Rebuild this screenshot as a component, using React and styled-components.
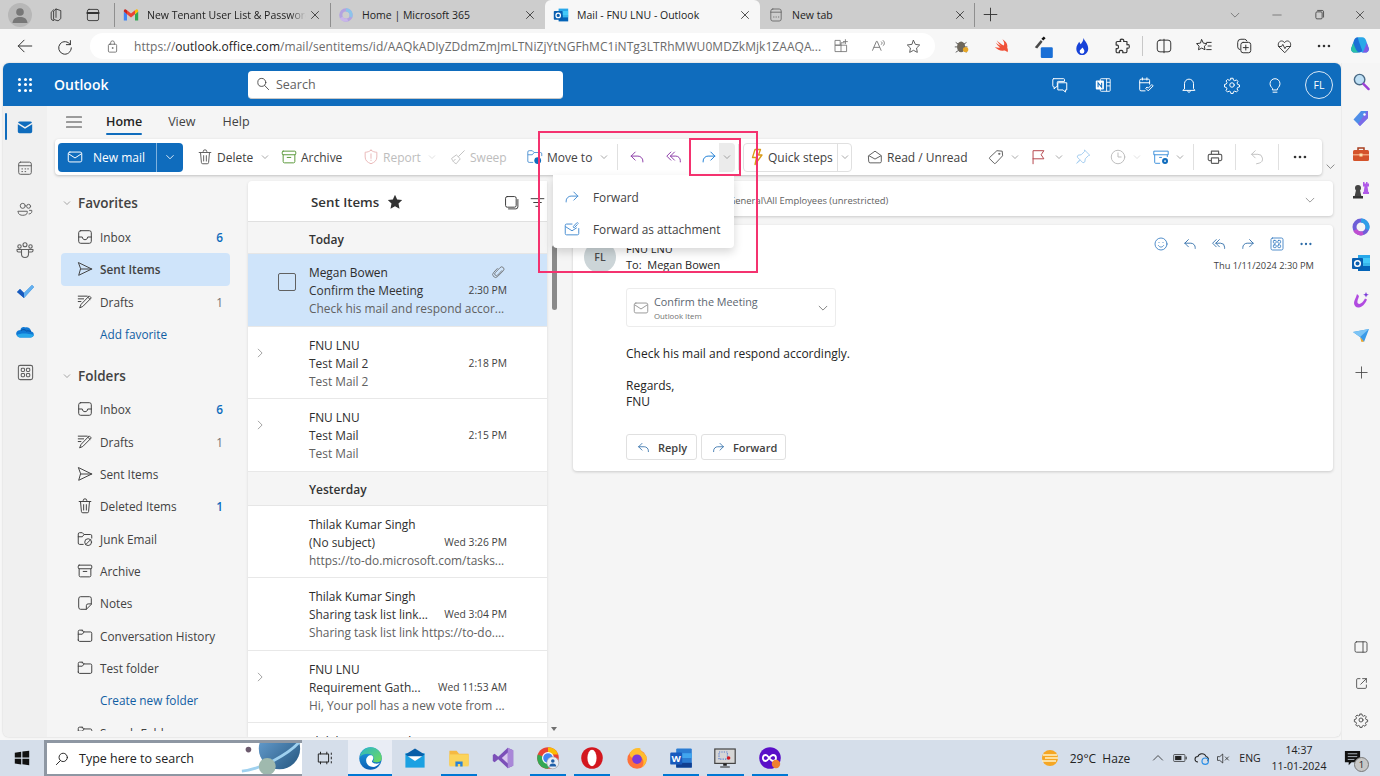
import React from 'react';
import styled, { createGlobalStyle } from 'styled-components';

const Global = createGlobalStyle`
  html, body { margin: 0; padding: 0; height: 776px; overflow: hidden; background: #f7f7f7; }
  body { font-family: "Open Sans", "Noto Sans", "Liberation Sans", sans-serif; color: #242424; font-size: 12px; }
  * { box-sizing: border-box; }
`;

const P = {
  mail: <><rect x="2.5" y="4.5" width="15" height="11" rx="1.8"/><path d="M3 6.5l7 4.6 7-4.6"/></>,
  mailOpen: <><path d="M3 8.5L10 3.5l7 5V15a1.5 1.5 0 0 1-1.5 1.5h-11A1.5 1.5 0 0 1 3 15z"/><path d="M3.5 8.7l6.5 3.6 6.5-3.6"/></>,
  reply: <path d="M8 4.5L3.5 9 8 13.5M3.5 9h7.5a5.5 5.5 0 0 1 5.5 5.5v1"/>,
  replyAll: <path d="M6.5 4.5L2 9l4.5 4.5M10.5 4.5L6 9l4.5 4.5M6 9h6a5 5 0 0 1 5 5v1.5"/>,
  forward: <path d="M12 4.5L16.5 9 12 13.5M16.5 9H9a5.5 5.5 0 0 0-5.5 5.5v1"/>,
  chev: <path d="M4.5 7.5L10 13l5.5-5.5"/>,
  chevR: <path d="M7.5 4.5L13 10l-5.5 5.5"/>,
  chevU: <path d="M3.5 13L10 6.5l6.5 6.5"/>,
  trash: <path d="M3.5 5h13M8 5V4a2 2 0 0 1 4 0v1M5 5l1 11a1.5 1.5 0 0 0 1.5 1.5h5A1.5 1.5 0 0 0 14 16l1-11M8.5 8.5v6M11.5 8.5v6"/>,
  archive: <><rect x="2.5" y="3.5" width="15" height="4" rx="1"/><path d="M3.5 7.5V15a1.5 1.5 0 0 0 1.5 1.5h10a1.5 1.5 0 0 0 1.5-1.5V7.5M8 10.5h4"/></>,
  shield: <path d="M10 2.5c2 1.500 4 2.200 6.500 2.200V10c0 3.800-2.500 6-6.500 7.500C6 16 3.500 13.800 3.500 10V4.700C6 4.700 8 4 10 2.500zM10 6.500v5M10 13.500v.4"/>,
  broom: <path d="M17 3l-6.500 6.500M8.500 8l4 4-4.500 5.500c-2-.8-4-2.800-5-5.500zM5 14.500l2-2"/>,
  bolt: <path d="M8 2.500h5.500L11.500 8H15l-7 9.500 1.500-7H5.500z"/>,
  tag: <><path d="M16.500 3.500L11 3 3 10.500c-.5.5-.5 1 0 1.500l5 5c.5.5 1 .5 1.500 0l7.500-8z"/><circle cx="13.500" cy="6.500" r=".7"/></>,
  flag: <path d="M4.500 17.500V3h12l-3 4.500 3 4.500h-12"/>,
  pin: <path d="M12 2.500l5.500 5.500-1.500.5-3.500 3.500-.5 3.500-2 1-3-3L3 17l3.500-4-3-3 1-2 3.500-.5L11.500 4z"/>,
  clock: <><circle cx="10" cy="10" r="7.500"/><path d="M10 5.500V10h3.500"/></>,
  printer: <><path d="M6 7V3.500h8V7M6 14H4a1.500 1.500 0 0 1-1.500-1.500v-4A1.500 1.500 0 0 1 4 7h12a1.500 1.500 0 0 1 1.500 1.500v4A1.500 1.500 0 0 1 16 14h-2"/><rect x="6" y="11" width="8" height="6" rx=".5"/></>,
  undo: <path d="M8 3L4 7l4 4M4 7h7a5 5 0 0 1 1.500 9.800L9.500 17.500"/>,
  hamburger: <path d="M2.500 5h15M2.500 10h15M2.500 15h15"/>,
  calendar: <><rect x="3" y="3.500" width="14" height="13.500" rx="2"/><path d="M3 7.500h14M6.500 11h.8M10 11h.8M13 11h.8M6.500 14h.8M10 14h.8"/></>,
  people: <><circle cx="7.500" cy="6.500" r="2.800"/><circle cx="14" cy="7" r="2.200"/><path d="M2.500 12.500h10v1.500c0 2-2.500 3-5 3s-5-1-5-3zM15 11.500h2.500v1.500c0 1.500-1.500 2.500-3 2.500"/></>,
  groups: <><circle cx="10" cy="4.800" r="2"/><circle cx="4.500" cy="6.500" r="1.700"/><circle cx="15.500" cy="6.500" r="1.700"/><path d="M6.500 9.500h7V14a3.500 3.500 0 0 1-7 0zM6 12H3.500a1.500 1.500 0 0 1-1.500-1.500V9.500h4M14 12h2.500a1.500 1.500 0 0 0 1.500-1.500V9.500h-4"/></>,
  apps: <><rect x="2.500" y="2.500" width="15" height="15" rx="2"/><rect x="5.500" y="5.500" width="3.500" height="3.500" rx="1"/><rect x="11" y="5.500" width="3.500" height="3.500" rx="1"/><rect x="5.500" y="11" width="3.500" height="3.500" rx="1"/><rect x="11" y="11" width="3.500" height="3.500" rx="1"/></>,
  inbox: <><rect x="3" y="3" width="14" height="14" rx="2.200"/><path d="M3 10h4c0 1.800 1.300 3 3 3s3-1.200 3-3h4"/></>,
  send: <path d="M3 3l14.500 7L3 17l2-7zM5 10h12.500"/>,
  drafts: <path d="M2.500 3.500h10M2.500 6.500h6M2.500 9.500h3M15 3.500l2 2L7.500 15l-3.500 1.500L5.500 13zM13.500 5l2 2"/>,
  folder: <path d="M2.500 14.500v-9.500A1.500 1.500 0 0 1 4 3.500h3L9 5.500h7A1.500 1.500 0 0 1 17.500 7v7.500A1.500 1.500 0 0 1 16 16H4a1.500 1.500 0 0 1-1.500-1.500zM2.500 8h4.500L9 5.500M7 3.500v1"/>,
  junk: <><path d="M8 16H4a1.500 1.500 0 0 1-1.500-1.500v-10A1.500 1.500 0 0 1 4 3h3l2 2h7A1.500 1.500 0 0 1 17.500 6.500V9M2.500 7.500h4.500L9 5"/><circle cx="13.500" cy="13.500" r="3.800"/><path d="M11 16l5-5"/></>,
  note: <path d="M3 5a2 2 0 0 1 2-2h10a2 2 0 0 1 2 2v6.500L11.500 17H5a2 2 0 0 1-2-2zM17 11h-3.500a2 2 0 0 0-2 2v4"/>,
  clip: <path d="M15.500 8l-6 6.500a2.400 2.400 0 0 1-3.500-3.500l7-7.300a3.200 3.200 0 0 1 4.600 4.500L9.500 16.500a4.100 4.100 0 0 1-5.800-5.800L9 5"/>,
  selectAll: <><rect x="3" y="3" width="12.500" height="12.500" rx="2"/><path d="M17.500 6.500V15a2.500 2.500 0 0 1-2.500 2.500H6.500"/></>,
  filter: <path d="M2.500 5.500h15M5.500 10h9M8 14.500h4"/>,
  smile: <><circle cx="10" cy="10" r="7.500"/><path d="M6.800 12c.8 1.200 2 1.800 3.200 1.800s2.400-.6 3.200-1.800M7.500 8v.1M12.500 8v.1"/></>,
  dots: <><circle cx="4.500" cy="10" r=".7"/><circle cx="10" cy="10" r=".7"/><circle cx="15.500" cy="10" r=".7"/></>,
  x: <path d="M5 5l10 10M15 5L5 15"/>,
  plus: <path d="M10 2.500v15M2.500 10h15"/>,
  minus: <path d="M4 10h12"/>,
  restore: <path d="M5.500 7A1.500 1.500 0 0 1 7 5.500h6A1.500 1.500 0 0 1 14.500 7v7a1.500 1.500 0 0 1-1.500 1.500H7A1.500 1.500 0 0 1 5.500 14zM8 3.500h6.500A2 2 0 0 1 16.500 5.500v7.500"/>,
  search: <><circle cx="8.500" cy="8" r="5"/><path d="M12 11.800l5 5.200"/></>,
  searchTB: <><circle cx="11.500" cy="8" r="5.200"/><path d="M8 12L3 17"/></>,
  chat: <path d="M3 3h11a1 1 0 0 1 1 1v2H8a1 1 0 0 0-1 1v5H5.500L3.500 14.500V12H3a1 1 0 0 1-1-1V4a1 1 0 0 1 1-1zM8 7.500h9.500v8H16v2.500l-2.500-2.500H8z"/>,
  calCheck: <path d="M9 16.500H4.500a1.500 1.500 0 0 1-1.500-1.500V5a1.500 1.500 0 0 1 1.500-1.500h8A1.500 1.500 0 0 1 14 5v4M3 7.500h11M6 2v2.500M11 2v2.500M10 14l2.500 2.500L18 11l-1.500-1.500-4 4-1-1z"/>,
  bell: <path d="M5 14V8.500a5 5 0 0 1 10 0V14l1.500 2h-13zM8.500 16.500c0 1 .6 1.500 1.500 1.500s1.500-.5 1.500-1.500"/>,
  gear: <><circle cx="10" cy="10" r="2.500"/><path d="M8.800 2.500h2.400l.4 2.100 1.500.7 1.900-1 1.600 1.700-1 1.800.7 1.600 2 .5v2.300l-2 .5-.7 1.600 1 1.800-1.600 1.700-1.900-1-1.500.7-.4 2h-2.400l-.4-2-1.500-.7-1.900 1-1.600-1.700 1-1.800-.7-1.600-2-.5V9.400l2-.5.7-1.600-1-1.800 1.600-1.700 1.900 1 1.500-.7z"/></>,
  bulb: <path d="M7 13.500C5.500 12.300 4.500 10.500 4.500 8.500a5.500 5.500 0 0 1 11 0c0 2-1 3.800-2.500 5l-.5 2h-5zM7.800 18h4.400"/>,
  lock: <><rect x="4.500" y="7" width="11" height="10.500" rx="1.500"/><path d="M7.500 7V5a2.500 2.500 0 0 1 5 0v2"/><circle cx="10" cy="12" r=".6"/></>,
  back: <path d="M9 3.500L2.500 10 9 16.500M2.500 10h15"/>,
  refresh: <path d="M16 4v4.500h-4.500M16 8.500A7 7 0 1 0 17 12"/>,
  star: <path d="M10 2.800l2.200 4.700 5.100.7-3.700 3.600.9 5.100L10 14.500l-4.500 2.400.9-5.100-3.700-3.600 5.100-.7z"/>,
  favs: <path d="M7.500 3l1.800 3.800 4 .6-2.900 2.800.7 4-3.600-1.900-3.600 1.900.7-4L1.700 7.400l4-.6zM13 6h5M14.500 10h3.500M13 14h5"/>,
  split: <><rect x="2.500" y="3.500" width="15" height="13" rx="3"/><path d="M10 2.500v15"/></>,
  collections: <><rect x="6.500" y="6" width="11" height="11.500" rx="2.500"/><path d="M5.500 14A3 3 0 0 1 3 11V6a3.500 3.500 0 0 1 3.500-3.500h4a3 3 0 0 1 2.800 2M12 9v5.500M9.200 11.800h5.600"/></>,
  puzzle: <path d="M8 3.500c0-1.500 4-1.500 4 0 0 1-.5 1.500 0 1.500h3.500v3.500c0 .5.700 0 1.500 0 1.500 0 1.500 4 0 4-1 0-1.500-.5-1.500 0V16c0 1-1 1.500-2 1.500h-2.500c-.5 0 .2-.8 0-1.500-.5-1.500-3.500-1.500-4 0-.2.700.5 1.500 0 1.500H5c-1 0-1.500-.8-1.500-1.500V13c0-.5.800.2 1.500 0 1.500-.5 1.500-3.500 0-4-.7-.2-1.500.5-1.500 0V6.500C3.500 5.500 4 5 5 5h3.500c.5 0-.5-.5-.5-1.500z"/>,
  heart: <path d="M10 17L3.500 10.500C1.500 8 3.200 3.500 6.500 3.500 8 3.500 9.300 4.300 10 5.500c.7-1.200 2-2 3.500-2 3.300 0 5 4.500 3 7zM3 10h3.500L8 7.500l2.500 5L12 10h5"/>,
  workspaces: <path d="M7 17a3 3 0 0 1-3-3V6.500L7 3.500M7 15V5l3-2.500 6 2v10l-3 2.500zM10 2.500V13"/>,
  vtabs: <><rect x="3" y="3" width="14" height="14" rx="2"/><path d="M3 7.500h14" strokeWidth="2.600"/></>,
  panel: <><rect x="2.500" y="3.500" width="15" height="13" rx="2"/><path d="M12.500 3.500v13"/></>,
  external: <path d="M8 3.500H5A1.500 1.500 0 0 0 3.500 5v10A1.500 1.500 0 0 0 5 16.500h10a1.500 1.500 0 0 0 1.500-1.500v-3M11.500 3.500h5v5M16.500 3.500L9 11"/>,
  taskview: <path d="M5 3.500v2M5 14.500v2M12 3.500v2M12 14.500v2M3 5.500h11v9H3zM17 4.500v1.500M17 9v2M17 14v1.500" />,
  newtab: <><rect x="3.500" y="2.500" width="13" height="15" rx="2.500"/><path d="M3.500 6.500h13M7 12.500h.5M10 12.500h.5M13 12.500h.5"/></>,
  immersive: <path d="M3 14.500L7.500 4h1L13 14.500M4.800 11h6.300M13.500 4.500c1 .8 1 2 0 3M15.500 3c2 1.800 2 4.500 0 6"/>,
  grid: <><rect x="3" y="3" width="6" height="6"/><path d="M3 9h14v8H3zM10 9v8M10 9V6h4M15.500 2v5M13 4.500h5"/></>,
  mailClip: <><path d="M10 4.500H4A1.500 1.500 0 0 0 2.500 6v9A1.500 1.500 0 0 0 4 16.500h12a1.500 1.500 0 0 0 1.500-1.500V9.500"/><path d="M3 7.500l7 4.500 5-3.200"/><path d="M17 3.500a1.400 1.400 0 0 0-2-.1l-3.500 3.800a.9.900 0 0 0 1.300 1.200l3-3.200"/></>,
};

const SvgBox = styled.svg`
  display: block;
  flex-shrink: 0;
`;

const Ic = ({ n, s = 18, c = 'currentColor', w = 1.1 }) => (
  <SvgBox viewBox="0 0 20 20" width={s} height={s} fill="none" stroke={c} strokeWidth={w} strokeLinecap="round" strokeLinejoin="round">
    {P[n]}
  </SvgBox>
);

const Logo = ({ s = 16, v = 20, children }) => (
  <SvgBox viewBox={`0 0 ${v} ${v}`} width={s} height={s}>{children}</SvgBox>
);

const Gmail = () => (
  <Logo>
    <path fill="#4285f4" d="M1 17h4V9L1 5.500z" />
    <path fill="#34a853" d="M15 17h4V5.500L15 9z" />
    <path fill="#ea4335" d="M5 9l5 4 5-4V4l-5 4-5-4z" />
    <path fill="#c5221f" d="M1 5.500L5 9V4L3.500 3C2 2.500 1 3.500 1 5.500z" />
    <path fill="#fbbc04" d="M19 5.500L15 9V4l1.500-1c1.500-.5 2.500.5 2.500 2.500z" />
  </Logo>
);
const M365 = () => (
  <Logo>
    <circle cx="10" cy="10" r="6.500" fill="none" stroke="#b3a3e0" strokeWidth="4" />
    <path d="M10 3.500a6.500 6.500 0 0 1 6 9" fill="none" stroke="#8cc4ea" strokeWidth="4" />
    <path d="M4 13a6.500 6.500 0 0 0 8 3" fill="none" stroke="#c9b5ea" strokeWidth="4" />
  </Logo>
);
const OutlookLogo = ({ s = 16 }) => (
  <Logo s={s}>
    <rect x="7" y="2" width="12" height="8" fill="#28a8ea" />
    <rect x="7" y="10" width="12" height="8" fill="#0364b8" />
    <rect x="12" y="5" width="7" height="8" fill="#50d9ff" opacity=".7" />
    <rect x="1" y="5" width="11" height="11" rx="1" fill="#0a5fb0" />
    <circle cx="6.500" cy="10.500" r="2.800" fill="none" stroke="#fff" strokeWidth="1.500" />
  </Logo>
);
const EdgeLogo = ({ s = 25 }) => (
  <Logo s={s}>
    <defs>
      <linearGradient id="edgeG" x1="0" y1="0" x2="1" y2="1"><stop offset="0" stopColor="#2bb5c8" /><stop offset="1" stopColor="#6fdc5a" /></linearGradient>
      <linearGradient id="edgeB" x1="0" y1="0" x2="0" y2="1"><stop offset="0" stopColor="#1fa0e0" /><stop offset="1" stopColor="#0b5fb5" /></linearGradient>
    </defs>
    <circle cx="10" cy="10" r="9" fill="url(#edgeB)" />
    <path d="M1.500 8.500C2.500 4 6 1 10 1c5 0 9 4 9 8.500 0 2.300-2 3.500-4 3.500-2 0-3.500-.5-3-1 1-1 1-3.500-1-5C8.500 5.500 4 6 1.500 8.500z" fill="url(#edgeG)" />
    <path d="M6.500 11.500c0-3 3-4.800 5-3.700 1 .8 1 2.700 0 3.700-.8.800-.2 2 2 2.500 1.500.3 3 0 4-.6-1.500 2.200-4 3.800-6.500 3.300-2.700-.5-4.500-2.700-4.500-5.200z" fill="#fff" />
  </Logo>
);

const Page = styled.div`
  position: relative;
  width: 1380px;
  height: 776px;
  display: flex;
  flex-direction: column;
  overflow: hidden;
`;

const TabStrip = styled.div`
  height: 29px;
  background: #cdcdcd;
  display: flex;
  align-items: stretch;
`;
const StripButton = styled.div`
  width: ${p => p.$w}px;
  display: flex;
  align-items: center;
  justify-content: center;
  color: #333;
`;
const Avatar16 = styled.div`
  width: 24px;
  height: 24px;
  border-radius: 50%;
  background: #b7b7b7;
  display: flex;
  align-items: center;
  justify-content: center;
`;
const Divider = styled.div`
  width: 1px;
  height: ${p => p.$h || 24}px;
  background: ${p => p.$c || '#8f8f8f'};
  align-self: center;
  flex-shrink: 0;
  margin-left: ${p => p.$ml || 0}px;
  margin-right: ${p => p.$mr || 0}px;
`;
const Tab = styled.div`
  width: 215px;
  flex-shrink: 0;
  padding: 0 8px;
  display: flex;
  align-items: center;
  gap: 8px;
  font-size: 10.500px;
  color: #222;
  background: ${p => (p.$active ? '#f7f7f7' : 'transparent')};
  border-radius: ${p => (p.$active ? '6px 6px 0 0' : '0')};
`;
const TabTitle = styled.div`
  flex: 1;
  min-width: 0;
  overflow: hidden;
  white-space: nowrap;
  margin-right: ${p => (p.$fade ? -6 : 0)}px;
  -webkit-mask-image: ${p => (p.$fade ? 'linear-gradient(90deg, #000 90%, transparent 100%)' : 'none')};
`;
const WindowControls = styled.div`
  margin-left: auto;
  display: flex;
  align-items: stretch;
`;

const AddressBar = styled.div`
  height: 34px;
  background: #f7f7f7;
  display: flex;
  align-items: center;
  padding-left: 5px;
`;
const BarButton = styled.div`
  width: ${p => p.$w || 40}px;
  height: 34px;
  display: flex;
  align-items: center;
  justify-content: center;
  color: #333;
  flex-shrink: 0;
`;
const UrlPill = styled.div`
  width: 845px;
  height: 26px;
  margin: 0 7px 0 5px;
  background: #fff;
  border-radius: 13px;
  display: flex;
  align-items: center;
  padding-left: 15px;
  flex-shrink: 0;
  color: #555;
`;
const UrlText = styled.div`
  width: 689px;
  margin-left: 14px;
  font-size: 12px;
  white-space: nowrap;
  overflow: hidden;
  color: #6b6b6b;
  letter-spacing: 0.05px;
  b { font-weight: 400; color: #222; }
`;
const PillIcon = styled.div`
  width: ${p => p.$w}px;
  display: flex;
  justify-content: center;
  color: #666;
`;

const Middle = styled.div`
  flex: 1;
  min-height: 0;
  display: flex;
`;
const OutlookWindow = styled.div`
  width: 1338px;
  margin-left: 3px;
  height: 674px;
  display: flex;
  flex-direction: column;
  border-radius: 6px;
  overflow: hidden;
  background: #f5f5f5;
  box-shadow: 0 0 2px rgba(0,0,0,.2);
`;
const Header = styled.div`
  height: 43px;
  flex-shrink: 0;
  background: #0f6cbd;
  color: #fff;
  display: flex;
  align-items: center;
  padding-right: 8px;
`;
const Waffle = styled.div`
  width: 44px;
  display: grid;
  grid-template-columns: repeat(3, 3px);
  grid-auto-rows: 3px;
  gap: 2.500px;
  justify-content: center;
  i { background: #fff; border-radius: 50%; display: block; }
`;
const Brand = styled.div`
  width: 201px;
  padding-left: 7px;
  font-size: 14px;
  font-weight: 600;
`;
const SearchBox = styled.div`
  width: 315px;
  height: 28px;
  background: #fff;
  border-radius: 4px;
  border-bottom: 1px solid #c8c8c8;
  color: #616161;
  display: flex;
  align-items: center;
  gap: 5px;
  padding-left: 7px;
  font-size: 12.500px;
`;
const HeaderIcons = styled.div`
  margin-left: auto;
  display: flex;
  align-items: center;
`;
const HeaderIcon = styled.div`
  width: 43px;
  display: flex;
  justify-content: center;
`;
const HeaderAvatar = styled.div`
  width: 28px;
  height: 28px;
  border-radius: 50%;
  border: 1px solid #dbe9f6;
  margin-left: 8.500px;
  display: flex;
  align-items: center;
  justify-content: center;
  font-size: 10.500px;
`;

const Body = styled.div`
  flex: 1;
  min-height: 0;
  display: flex;
`;
const Rail = styled.div`
  width: 44px;
  flex-shrink: 0;
  background: #f0f0f0;
  display: flex;
  flex-direction: column;
`;
const RailItem = styled.div`
  height: 41px;
  display: flex;
  align-items: center;
  justify-content: center;
  color: #616161;
  position: relative;
  &::before {
    content: ${p => (p.$active ? '""' : 'none')};
    position: absolute;
    left: 2px;
    top: 7px;
    bottom: 7px;
    width: 2px;
    background: #0f6cbd;
    border-radius: 1px;
  }
`;
const Main = styled.div`
  flex: 1;
  min-width: 0;
  display: flex;
  flex-direction: column;
`;
const RibbonTabs = styled.div`
  height: 33px;
  flex-shrink: 0;
  display: flex;
  align-items: center;
  padding: 0 0 2px 17px;
  color: #424242;
`;
const RibbonTab = styled.div`
  font-size: 12.500px;
  margin-left: ${p => p.$ml}px;
  font-weight: ${p => (p.$active ? 600 : 400)};
  color: ${p => (p.$active ? '#242424' : '#424242')};
  position: relative;
  &::after {
    content: ${p => (p.$active ? '""' : 'none')};
    position: absolute;
    left: 0;
    right: 0;
    bottom: -5px;
    height: 2.500px;
    background: #0f6cbd;
    border-radius: 1px;
  }
`;
const ToolRow = styled.div`
  display: flex;
  align-items: flex-end;
  padding-left: 8px;
  height: 36px;
  flex-shrink: 0;
  color: #616161;
`;
const Toolbar = styled.div`
  width: 1267px;
  height: 36px;
  background: #fff;
  border-radius: 4px;
  box-shadow: 0 1px 3px rgba(0,0,0,.22);
  display: flex;
  align-items: center;
  padding-left: 3px;
  margin-right: 2px;
  flex-shrink: 0;
`;
const NewMail = styled.div`
  width: 125px;
  height: 29px;
  background: #0f6cbd;
  color: #fff;
  border-radius: 4px;
  display: flex;
  align-items: stretch;
  font-size: 12px;
`;
const NewMailMain = styled.div`
  width: 99px;
  display: flex;
  align-items: center;
  gap: 9px;
  padding-left: 8px;
  border-right: 1px solid #7fb2de;
`;
const NewMailChev = styled.div`
  flex: 1;
  display: flex;
  align-items: center;
  justify-content: center;
`;
const ToolBtn = styled.div`
  width: ${p => p.$w}px;
  flex-shrink: 0;
  margin-left: ${p => p.$ml || 0}px;
  display: flex;
  align-items: center;
  justify-content: ${p => (p.$center ? 'center' : 'flex-start')};
  gap: 3px;
  font-size: 12px;
  white-space: nowrap;
  color: ${p => (p.$off ? '#bdbdbd' : '#424242')};
`;
const SmallChev = styled.span`
  margin-left: ${p => p.$ml || 2}px;
  color: ${p => (p.$off ? '#c8c8c8' : '#616161')};
  display: block;
`;
const ForwardMain = styled.div`
  width: 28px;
  padding-left: 9px;
  flex-shrink: 0;
`;
const ForwardChev = styled.div`
  width: 16px;
  height: 29px;
  background: #ebebeb;
  border-radius: 0 4px 4px 0;
  display: flex;
  align-items: center;
  justify-content: center;
  color: #616161;
  flex-shrink: 0;
`;
const QuickBox = styled.div`
  width: 109px;
  height: 29px;
  margin-left: 4px;
  border: 1px solid #e0e0e0;
  border-radius: 4px;
  display: flex;
  align-items: stretch;
  flex-shrink: 0;
`;
const QuickMain = styled.div`
  width: 94px;
  padding-left: 3px;
  border-right: 1px solid #e0e0e0;
  display: flex;
  align-items: center;
  gap: 1px;
  font-size: 12px;
  white-space: nowrap;
  color: #424242;
`;
const QuickChev = styled.div`
  flex: 1;
  display: flex;
  align-items: center;
  justify-content: center;
`;
const RowChev = styled.div`
  padding-bottom: 2px;
  color: #616161;
`;
const Content = styled.div`
  flex: 1;
  min-height: 0;
  margin-top: 6px;
  display: flex;
`;
const Nav = styled.div`
  width: 201px;
  flex-shrink: 0;
  padding-top: 6px;
  overflow: hidden;
  height: 550px;
`;
const NavHead = styled.div`
  height: 32px;
  display: flex;
  align-items: center;
  padding-left: 15px;
  gap: 6px;
  margin-top: ${p => p.$mt || 0}px;
  margin-bottom: ${p => p.$mb || 0}px;
  font-size: 13.500px;
  font-weight: 600;
  color: #424242;
`;
const NavRow = styled.div`
  height: 32.330px;
  margin: 0 18px 0 14px;
  padding: 0 7px 0 15px;
  display: flex;
  align-items: center;
  gap: 6px;
  font-size: 11.800px;
  border-radius: 4px;
  color: ${p => (p.$link ? '#115ea3' : '#424242')};
  background: ${p => (p.$active ? '#cfe4fa' : 'transparent')};
  font-weight: ${p => (p.$active ? 600 : 400)};
`;
const NavLabel = styled.span`
  flex: 1;
  white-space: nowrap;
  padding-left: ${p => (p.$indent ? 24 : 0)}px;
`;
const Count = styled.span`
  font-weight: ${p => (p.$blue ? 600 : 400)};
  color: ${p => (p.$blue ? '#0f6cbd' : '#707070')};
`;
const ListPanel = styled.div`
  width: 299px;
  flex-shrink: 0;
  background: #fff;
  border-radius: 4px 0 0 0;
  overflow: hidden;
  box-shadow: 0 1px 3px rgba(0,0,0,.12);
`;
const ListHead = styled.div`
  height: 41px;
  border-bottom: 1px solid #e0e0e0;
  display: flex;
  align-items: center;
  padding: 2px 0 0 63px;
  font-size: 13.300px;
  font-weight: 600;
  color: #333;
  gap: 7px;
`;
const HeadTools = styled.div`
  margin-left: auto;
  display: flex;
  gap: 9px;
  padding-right: 1px;
  color: #333;
`;
const GroupHead = styled.div`
  height: ${p => p.$h}px;
  background: #f5f5f5;
  padding: 3px 0 0 61px;
  display: flex;
  align-items: center;
  font-weight: 600;
  font-size: 12px;
  color: #333;
  border-bottom: 1px solid #e6e6e6;
`;
const Item = styled.div`
  height: 72.500px;
  border-bottom: 1px solid #e8e8e8;
  background: ${p => (p.$active ? '#cfe4fa' : '#fff')};
  display: flex;
  padding: 9px 40px 0 0;
`;
const ItemLead = styled.div`
  width: 61px;
  flex-shrink: 0;
  padding: ${p => (p.$check ? '10px 0 0 30px' : '10px 0 0 5px')};
  color: #757575;
`;
const Check = styled.div`
  width: 18px;
  height: 18px;
  background: transparent;
  border: 1px solid #616161;
  border-radius: 2px;
`;
const ItemBody = styled.div`
  flex: 1;
  min-width: 0;
  font-size: 11.900px;
  line-height: 18px;
`;
const Line = styled.div`
  display: flex;
  justify-content: space-between;
  align-items: center;
  white-space: nowrap;
  height: 18px;
  color: ${p => p.$c || '#333'};
`;
const Time = styled.span`
  font-size: 10.300px;
  color: #424242;
  flex-shrink: 0;
`;
const ClipWrap = styled.span`
  margin-right: 2px;
  color: #616161;
`;
const ScrollTrack = styled.div`
  width: 14px;
  flex-shrink: 0;
  padding-top: 64px;
  display: flex;
  flex-direction: column;
  align-items: center;
  height: 555px;
`;
const Thumb = styled.div`
  width: 5px;
  height: 65px;
  background: #8a8a8a;
  border-radius: 3px;
`;
const ScrollArrow = styled.div`
  width: 0;
  height: 0;
  border: 3px solid transparent;
  border-top: 4px solid #707070;
  margin-top: auto;
  margin-bottom: 2px;
`;
const Reading = styled.div`
  width: 760px;
  margin-left: 12px;
  flex-shrink: 0;
  display: flex;
  flex-direction: column;
  gap: 9px;
`;
const LabelBar = styled.div`
  height: 35px;
  background: #fff;
  border-radius: 4px;
  box-shadow: 0 1px 3px rgba(0,0,0,.18);
  display: flex;
  align-items: center;
  padding: 3px 16px 0 155.500px;
  font-size: 9.400px;
  color: #616161;
  justify-content: space-between;
  white-space: nowrap;
`;
const Card = styled.div`
  background: #fff;
  border-radius: 4px;
  box-shadow: 0 1px 3px rgba(0,0,0,.18);
  padding: 16px 19px 11px 11px;
`;
const CardHead = styled.div`
  display: flex;
  align-items: flex-start;
  gap: 10px;
  height: 32px;
`;
const PersonaCircle = styled.div`
  width: 32px;
  height: 32px;
  border-radius: 50%;
  background: #ccd5d8;
  color: #4a4a4a;
  font-size: 10.500px;
  font-weight: 600;
  display: flex;
  align-items: center;
  justify-content: center;
  flex-shrink: 0;
`;
const WhoBlock = styled.div`
  font-size: 11px;
  line-height: 16px;
`;
const MetaBlock = styled.div`
  margin-left: auto;
  display: flex;
  flex-direction: column;
  align-items: flex-end;
  margin-top: -8px;
`;
const ActionRow = styled.div`
  display: flex;
  margin-right: -6px;
  color: #2d6ca8;
`;
const ActionIcon = styled.div`
  width: 29px;
  height: 22px;
  display: flex;
  align-items: center;
  justify-content: center;
`;
const DateText = styled.div`
  font-size: 9.300px;
  color: #424242;
  margin-top: 4px;
`;
const CardInner = styled.div`
  padding-left: 42px;
`;
const Attachment = styled.div`
  width: 210px;
  height: 39px;
  margin-top: 15px;
  border: 1px solid #ececec;
  border-radius: 3px;
  display: flex;
  align-items: center;
  padding: 0 5px 0 5px;
  color: #8a8a8a;
  gap: 4px;
`;
const AttachText = styled.div`
  flex: 1;
  padding-top: 2px;
`;
const AttachName = styled.div`
  font-size: 10.800px;
  line-height: 14px;
  color: #5c6670;
`;
const AttachKind = styled.div`
  font-size: 7.800px;
  line-height: 12px;
  margin-top: 1px;
  color: #707070;
`;
const Message = styled.div`
  margin-top: 19px;
  font-size: 12px;
  line-height: 16px;
  color: #242424;
`;
const Blank = styled.div`
  height: 16px;
`;
const ReplyRow = styled.div`
  display: flex;
  gap: 4px;
  margin-top: 24px;
`;
const ReplyBtn = styled.div`
  width: ${p => p.$w}px;
  height: 26px;
  border: 1px solid #e0e0e0;
  border-radius: 3px;
  display: flex;
  align-items: center;
  gap: 7px;
  padding-left: 9px;
  font-size: 11px;
  font-weight: 600;
  color: #424242;
`;

const SideBar = styled.div`
  flex: 1;
  display: flex;
  flex-direction: column;
  align-items: stretch;
  background: #f5f5f5;
  border-left: 1px solid #ececec;
`;
const SideIcon = styled.div`
  height: 36.400px;
  display: flex;
  align-items: center;
  justify-content: center;
  color: #424242;
`;
const SideBottom = styled.div`
  margin-top: auto;
  padding-bottom: 2px;
`;

const Taskbar = styled.div`
  height: 36px;
  background: #d5deea;
  display: flex;
  align-items: stretch;
  flex-shrink: 0;
`;
const WinStart = styled.div`
  width: 44px;
  display: flex;
  align-items: center;
  justify-content: center;
`;
const TaskSearch = styled.div`
  width: 258px;
  background: #fff;
  border: 3px solid #8e97a3;
  border-bottom-width: 2px;
  border-right: 0;
  display: flex;
  align-items: center;
  padding-left: 7px;
  gap: 9px;
  font-size: 12.500px;
  color: #222;
  overflow: hidden;
`;
const Planet = styled.div`
  margin-left: auto;
`;
const TaskApp = styled.div`
  width: ${p => p.$w || 44.400}px;
  flex-shrink: 0;
  display: flex;
  align-items: center;
  justify-content: center;
  position: relative;
  background: ${p => (p.$active ? '#e9edf5' : 'transparent')};
  &::after {
    content: ${p => (p.$run ? '""' : 'none')};
    position: absolute;
    bottom: 0;
    left: ${p => (p.$active ? 0 : 4)}px;
    right: ${p => (p.$active ? 0 : 4)}px;
    height: 2.500px;
    background: #0078d4;
  }
`;
const Tray = styled.div`
  margin-left: auto;
  display: flex;
  align-items: center;
  padding-right: 8px;
  color: #222;
`;
const TrayCell = styled.div`
  width: ${p => p.$w}px;
  margin-left: ${p => p.$ml || 0}px;
  display: flex;
  justify-content: center;
  align-items: center;
  font-size: ${p => p.$fs || 11}px;
  white-space: nowrap;
`;
const ClockCell = styled.div`
  width: 66px;
  text-align: center;
  font-size: 10.500px;
  line-height: 16px;
`;
const Badge = styled.span`
  position: absolute;
  right: 3px;
  bottom: -4px;
  width: 15px;
  height: 15px;
  border-radius: 50%;
  background: #c7c7c7;
  border: 1px solid #777;
  font-size: 9.500px;
  line-height: 13px;
  text-align: center;
`;
const NotifWrap = styled.div`
  position: relative;
  width: 40px;
  display: flex;
  justify-content: center;
`;

const Menu = styled.div`
  position: absolute;
  left: 553px;
  top: 175px;
  width: 181px;
  height: 73px;
  padding-top: 6px;
  background: #fff;
  border-radius: 0 0 4px 4px;
  box-shadow: 0 4px 10px rgba(0,0,0,.16);
  z-index: 5;
`;
const MenuItem = styled.div`
  height: 32px;
  display: flex;
  align-items: center;
  gap: 12px;
  padding-left: 10px;
  font-size: 11.800px;
  color: #424242;
  white-space: nowrap;
`;
const Annot = styled.div`
  position: absolute;
  left: ${p => p.$x}px;
  top: ${p => p.$y}px;
  width: ${p => p.$w}px;
  height: ${p => p.$h}px;
  border: 2px solid #f4326f;
  z-index: 6;
  pointer-events: none;
`;

const grey = '#616161';
const Chev = ({ off, s = 10, ml }) => (
  <SmallChev $off={off} $ml={ml}><Ic n="chev" s={s} /></SmallChev>
);

const NavItems = ({ icon, label, count, blue, active }) => (
  <NavRow $active={active}>
    <Ic n={icon} s={18} />
    <NavLabel>{label}</NavLabel>
    {count && <Count $blue={blue}>{count}</Count>}
  </NavRow>
);

const Msg = ({ sender, subject, preview, time, chev, active }) => (
  <Item $active={active}>
    <ItemLead $check={active}>
      {active ? <Check /> : chev && <Ic n="chevR" s={14} c="#888" />}
    </ItemLead>
    <ItemBody>
      <Line $c="#2b2b2b">
        {sender}
        {active && <ClipWrap><Ic n="clip" s={14} /></ClipWrap>}
      </Line>
      <Line $c="#333">
        {subject}
        <Time>{time}</Time>
      </Line>
      <Line $c="#616161">{preview}</Line>
    </ItemBody>
  </Item>
);

function M365Side() {
  return (
    <Logo s={20}>
      <circle cx="10" cy="10" r="6.500" fill="none" stroke="#6f5fd8" strokeWidth="4" />
      <path d="M10 3.500a6.500 6.500 0 0 1 6 9" fill="none" stroke="#2f9fe8" strokeWidth="4" />
      <path d="M4 13a6.500 6.500 0 0 0 8 3" fill="none" stroke="#c04fd0" strokeWidth="4" />
    </Logo>
  );
}

export default function App() {
  return (
    <Page>
      <Global />
      <TabStrip>
        <StripButton $w={8} />
        <StripButton $w={24}>
          <Avatar16>
            <Logo s={20}><circle cx="10" cy="7" r="3.800" fill="#777" /><path d="M2.500 18c.5-4.500 3.500-6 7.500-6s7 1.500 7.500 6z" fill="#777" /></Logo>
          </Avatar16>
        </StripButton>
        <StripButton $w={48}><Ic n="workspaces" s={16} /></StripButton>
        <StripButton $w={26}><Ic n="vtabs" s={16} /></StripButton>
        <Divider $ml={8} />
        <Tab>
          <Gmail />
          <TabTitle $fade>New Tenant User List &amp; Password</TabTitle>
          <Ic n="x" s={14} c="#222" />
        </Tab>
        <Divider $mr={-1} />
        <Tab>
          <M365 />
          <TabTitle>Home | Microsoft 365</TabTitle>
          <Ic n="x" s={14} c="#222" />
        </Tab>
        <Tab $active>
          <OutlookLogo />
          <TabTitle>Mail - FNU LNU - Outlook</TabTitle>
          <Ic n="x" s={14} c="#222" />
        </Tab>
        <Tab>
          <Ic n="newtab" s={16} c="#666" />
          <TabTitle>New tab</TabTitle>
          <Ic n="x" s={14} c="#222" />
        </Tab>
        <Divider $ml={-1} />
        <StripButton $w={30}><Ic n="plus" s={17} /></StripButton>
        <WindowControls>
          <StripButton $w={42}><Ic n="chev" s={14} c="#666" /></StripButton>
          <StripButton $w={42}><Ic n="minus" s={14} c="#666" /></StripButton>
          <StripButton $w={41}><Ic n="restore" s={14} /></StripButton>
          <StripButton $w={41}><Ic n="x" s={14} /></StripButton>
        </WindowControls>
      </TabStrip>

      <AddressBar>
        <BarButton><Ic n="back" s={18} /></BarButton>
        <BarButton><Ic n="refresh" s={18} /></BarButton>
        <UrlPill>
          <Ic n="lock" s={15} c="#666" />
          <UrlText>https://<b>outlook.office.com</b>/mail/sentitems/id/AAQkADIyZDdmZmJmLTNiZjYtNGFhMC1iNTg3LTRhMWU0MDZkMjk1ZAAQA...</UrlText>
          <PillIcon $w={36}><Ic n="grid" s={16} c="#777" /></PillIcon>
          <PillIcon $w={38}><Ic n="immersive" s={17} c="#777" /></PillIcon>
          <PillIcon $w={32}><Ic n="star" s={17} c="#555" /></PillIcon>
        </UrlPill>
        <BarButton>
          <Logo s={18}>
            <ellipse cx="9" cy="11" rx="4.500" ry="6" fill="#6e675b" />
            <path d="M3 6l3 2M15 6l-3 2M2 11h3M16 11h-3M3 17l3-2M15 17l-3-2" stroke="#555" fill="none" />
            <circle cx="14" cy="14" r="3" fill="#e7a727" />
          </Logo>
        </BarButton>
        <BarButton>
          <Logo s={18}>
            <path d="M2 11c3 3 7 5 10 4 1.500 0 3 .5 4 2 .8-1.500.8-3-.2-5 .8-3-.8-7-5.300-9.500 1.800 2.500 2.500 5 1.500 7C9 7.800 6 5.500 4 3.500c1.500 2.500 3.500 5 5 6.500C7 9 4.500 7.500 3 6c1 2 3 4 5 5.800-2 .3-4 0-6-.8z" fill="#f05138" />
          </Logo>
        </BarButton>
        <BarButton>
          <Logo s={24}>
            <path d="M4 11l5-6 1.500 1.500L6 12z" fill="#4a4a4a" />
            <path d="M9.500 4l2-2 1.500 1.500-2 2z" fill="#111" />
            <rect x="9" y="11" width="10" height="9" rx="1" fill="#1a6fd6" />
          </Logo>
        </BarButton>
        <BarButton>
          <Logo s={19}>
            <path d="M11 1c1 3 5 6 5 11 0 4-3 7-6.500 7S3.500 16 3.500 12c0-3 2-5 3-7 .5 1 1 2 1.500 2.500C9.500 6 11 4 11 1z" fill="#1742d8" />
            <path d="M10 11c1 1.500 2 2.500 2 4a2.500 2.500 0 0 1-5 0c0-1.500 2-2.500 3-4z" fill="#fff" />
          </Logo>
        </BarButton>
        <BarButton><Ic n="puzzle" s={18} w={1.3} /></BarButton>
        <Divider $h={20} $c="#c8c8c8" $ml={0} $mr={1} />
        <BarButton><Ic n="split" s={18} /></BarButton>
        <BarButton><Ic n="favs" s={18} /></BarButton>
        <BarButton><Ic n="collections" s={18} /></BarButton>
        <BarButton>
          <Ic n="heart" s={17} />
        </BarButton>
        <BarButton><Ic n="dots" s={18} w={1.5} /></BarButton>
        <BarButton $w={32}>
          <Logo s={22}>
            <path d="M8 2h4c2 0 3 1.500 3.500 3l2.500 7c.5 2-1 4-3 4h-2c-1.500 0-2.500-.8-3-2L7 6z" fill="#2aa8e8" />
            <path d="M8 2C6 2 5 3.500 4.500 5L2 12c-.5 2 1 4 3 4h4c1.500 0 2.500-.8 3-2l-3-8z" fill="#1b6fd6" />
            <path d="M12 16h3c2 0 3.500-2 3-4l-2-5c-1 3-2 7-4 9z" fill="#7f5be6" />
            <path d="M2 12l2-5c1 3 2 7 5 9H5c-2 0-3.500-2-3-4z" fill="#28c0a8" />
          </Logo>
        </BarButton>
      </AddressBar>

      <Middle>
        <OutlookWindow>
          <Header>
            <Waffle>{Array.from({ length: 9 }, (_, i) => <i key={i} />)}</Waffle>
            <Brand>Outlook</Brand>
            <SearchBox><Ic n="search" s={16} c="#424242" />Search</SearchBox>
            <HeaderIcons>
              <HeaderIcon><Ic n="chat" s={18} /></HeaderIcon>
              <HeaderIcon>
                <Logo s={18}>
                  <rect x="7" y="3" width="11" height="14" rx="1" fill="none" stroke="#fff" />
                  <path d="M14 3v14M14 7h4M14 11h4" stroke="#fff" fill="none" />
                  <rect x="2" y="5" width="9" height="10" rx="1" fill="#fff" />
                  <path d="M4.500 12.500v-5l4 5v-5" stroke="#0f6cbd" strokeWidth="1.200" fill="none" />
                </Logo>
              </HeaderIcon>
              <HeaderIcon><Ic n="calCheck" s={18} /></HeaderIcon>
              <HeaderIcon><Ic n="bell" s={18} /></HeaderIcon>
              <HeaderIcon><Ic n="gear" s={18} /></HeaderIcon>
              <HeaderIcon><Ic n="bulb" s={18} /></HeaderIcon>
            </HeaderIcons>
            <HeaderAvatar>FL</HeaderAvatar>
          </Header>
          <Body>
            <Rail>
              <RailItem $active>
                <Logo s={18}>
                  <path d="M2 7l8 5 8-5v8a2 2 0 0 1-2 2H4a2 2 0 0 1-2-2z" fill="#0f6cbd" />
                  <path d="M2.300 5.200A2 2 0 0 1 4 4h12a2 2 0 0 1 1.700 1.200L10 10z" fill="#0f6cbd" />
                </Logo>
              </RailItem>
              <RailItem><Ic n="calendar" s={18} /></RailItem>
              <RailItem><Ic n="people" s={18} /></RailItem>
              <RailItem><Ic n="groups" s={20} /></RailItem>
              <RailItem>
                <Logo s={20}>
                  <path d="M2 11l3-3 4 4 8-8 2 2-10 11z" fill="#2b7cd3" />
                  <path d="M9 12l8-8 2 2-10 11z" fill="#62b0ef" />
                  <path d="M2 11l3-3 4 4-0 5z" fill="#195abd" />
                </Logo>
              </RailItem>
              <RailItem>
                <Logo s={20}>
                  <path d="M5 15.500h10.500c4 0 4.500-5 .8-6C15.500 6 12.500 4.500 10 5.500 8.500 4.500 5.500 5.500 5.500 8 2 8 .5 11 1.500 13c.7 1.500 2 2.500 3.500 2.500z" fill="#0f78d4" />
                  <path d="M6 8.500c2-1.500 4-1 5.500.5 1.500-.5 3 0 4.500.5" fill="none" stroke="#0a4f9e" strokeWidth="1" />
                  <path d="M2 13c3-2 10-2 17 0-.5 1.500-2 2.500-3.500 2.500H5C3.800 15.500 2.700 14.500 2 13z" fill="#28a8ea" />
                </Logo>
              </RailItem>
              <RailItem><Ic n="apps" s={19} /></RailItem>
            </Rail>
            <Main>
              <RibbonTabs>
                <Ic n="hamburger" s={20} />
                <RibbonTab $active $ml={22}>Home</RibbonTab>
                <RibbonTab $ml={26}>View</RibbonTab>
                <RibbonTab $ml={27}>Help</RibbonTab>
              </RibbonTabs>
              <ToolRow>
                <Toolbar>
                  <NewMail>
                    <NewMailMain><Ic n="mail" s={18} />New mail</NewMailMain>
                    <NewMailChev><Ic n="chev" s={12} w={1.4} /></NewMailChev>
                  </NewMail>
                  <ToolBtn $w={84} $ml={13}><Ic n="trash" s={18} c={grey} />Delete<Chev ml={4} /></ToolBtn>
                  <ToolBtn $w={82}><Ic n="archive" s={18} c="#5b9a3c" />Archive</ToolBtn>
                  <ToolBtn $w={87} $off><Ic n="shield" s={18} c="#eab9b9" />Report<Chev off ml={3} /></ToolBtn>
                  <ToolBtn $w={77} $off><Ic n="broom" s={18} c="#c2c2c2" />Sweep</ToolBtn>
                  <ToolBtn $w={91}>
                    <Logo s={18}>
                      <path d="M8 16H3.500A1.500 1.500 0 0 1 2 14.500v-10A1.500 1.500 0 0 1 3.500 3H7l2 2h7a1.500 1.500 0 0 1 1.500 1.500V9M2 7.500h5L9 5" fill="none" stroke="#4a8fd1" />
                      <circle cx="13" cy="14" r="3.800" fill="#0f6cbd" />
                    </Logo>
                    Move to<Chev ml={4} />
                  </ToolBtn>
                  <Divider $h={26} $c="#e0e0e0" />
                  <ToolBtn $w={38} $center><Ic n="reply" s={18} c="#8d3fa8" /></ToolBtn>
                  <ToolBtn $w={35} $center><Ic n="replyAll" s={18} c="#8d3fa8" /></ToolBtn>
                  <ForwardMain><Ic n="forward" s={18} c="#1f7fd6" /></ForwardMain>
                  <ForwardChev><Ic n="chev" s={10} /></ForwardChev>
                  <Divider $h={26} $c="#e0e0e0" $ml={3} />
                  <QuickBox>
                    <QuickMain><Ic n="bolt" s={20} c="#d89a17" w={1.3} />Quick steps</QuickMain>
                    <QuickChev><Ic n="chev" s={10} c={grey} /></QuickChev>
                  </QuickBox>
                  <ToolBtn $w={121} $ml={14}><Ic n="mailOpen" s={18} c={grey} />Read / Unread</ToolBtn>
                  <ToolBtn $w={42}><Ic n="tag" s={18} c={grey} /><Chev /></ToolBtn>
                  <ToolBtn $w={45}><Ic n="flag" s={18} c="#b5474e" /><Chev ml={4} /></ToolBtn>
                  <ToolBtn $w={35}><Ic n="pin" s={18} c="#a5cdf0" /></ToolBtn>
                  <ToolBtn $w={43} $off><Ic n="clock" s={18} c="#bdbdbd" /><Chev off /></ToolBtn>
                  <ToolBtn $w={41}>
                    <Logo s={18}>
                      <path d="M9 17H4a1 1 0 0 1-1-1V7.500M2 3.500h16v4H2zM17 7.500V10M8 10.500h3" fill="none" stroke="#2f88d8" />
                      <circle cx="14.500" cy="14.500" r="3.300" fill="#0f6cbd" />
                      <circle cx="14.500" cy="14.500" r="1" fill="#fff" />
                    </Logo>
                    <Chev />
                  </ToolBtn>
                  <Divider $h={26} $c="#e0e0e0" />
                  <ToolBtn $w={41} $center><Ic n="printer" s={18} c={grey} w={1.3} /></ToolBtn>
                  <Divider $h={26} $c="#e0e0e0" />
                  <ToolBtn $w={42} $center><Ic n="undo" s={18} c="#c2c2c2" /></ToolBtn>
                  <Divider $h={26} $c="#e0e0e0" />
                  <ToolBtn $w={42} $center><Ic n="dots" s={18} c="#333" w={1.6} /></ToolBtn>
                </Toolbar>
                <RowChev><Ic n="chev" s={13} /></RowChev>
              </ToolRow>
              <Content>
                <Nav>
                  <NavHead $mb={2}><Ic n="chev" s={10} c={grey} />Favorites</NavHead>
                  <NavItems icon="inbox" label="Inbox" count="6" blue />
                  <NavItems icon="send" label="Sent Items" active />
                  <NavItems icon="drafts" label="Drafts" count="1" />
                  <NavRow $link><NavLabel $indent>Add favorite</NavLabel></NavRow>
                  <NavHead $mt={10} $mb={1}><Ic n="chev" s={10} c={grey} />Folders</NavHead>
                  <NavItems icon="inbox" label="Inbox" count="6" blue />
                  <NavItems icon="drafts" label="Drafts" count="1" />
                  <NavItems icon="send" label="Sent Items" />
                  <NavItems icon="trash" label="Deleted Items" count="1" blue />
                  <NavItems icon="junk" label="Junk Email" />
                  <NavItems icon="archive" label="Archive" />
                  <NavItems icon="note" label="Notes" />
                  <NavItems icon="folder" label="Conversation History" />
                  <NavItems icon="folder" label="Test folder" />
                  <NavRow $link><NavLabel $indent>Create new folder</NavLabel></NavRow>
                  <NavItems icon="folder" label="Search Folders" />
                </Nav>
                <ListPanel>
                  <ListHead>
                    Sent Items
                    <Logo s={18}><path d="M10 2l2.400 5.200 5.600.7-4.100 3.900 1.100 5.600-5-2.800-5 2.800 1.100-5.600L2 7.900l5.600-.7z" fill="#333" /></Logo>
                    <HeadTools>
                      <Ic n="selectAll" s={17} />
                      <Ic n="filter" s={17} />
                    </HeadTools>
                  </ListHead>
                  <GroupHead $h={32}>Today</GroupHead>
                  <Msg active sender="Megan Bowen" subject="Confirm the Meeting" preview="Check his mail and respond accor..." time="2:30 PM" />
                  <Msg chev sender="FNU LNU" subject="Test Mail 2" preview="Test Mail 2" time="2:18 PM" />
                  <Msg chev sender="FNU LNU" subject="Test Mail" preview="Test Mail" time="2:15 PM" />
                  <GroupHead $h={34}>Yesterday</GroupHead>
                  <Msg sender="Thilak Kumar Singh" subject="(No subject)" preview="https://to-do.microsoft.com/tasks..." time="Wed 3:26 PM" />
                  <Msg sender="Thilak Kumar Singh" subject="Sharing task list link..." preview="Sharing task list link https://to-do...." time="Wed 3:04 PM" />
                  <Msg chev sender="FNU LNU" subject="Requirement Gath..." preview="Hi, Your poll has a new vote from ..." time="Wed 11:53 AM" />
                  <Msg sender="Thilak Kumar Singh" />
                </ListPanel>
                <ScrollTrack>
                  <Thumb />
                  <ScrollArrow />
                </ScrollTrack>
                <Reading>
                  <LabelBar>
                    General\All Employees (unrestricted)
                    <Ic n="chev" s={14} c="#808080" />
                  </LabelBar>
                  <Card>
                    <CardHead>
                      <PersonaCircle>FL</PersonaCircle>
                      <WhoBlock>
                        <div>FNU LNU</div>
                        <div>To:&nbsp; Megan Bowen</div>
                      </WhoBlock>
                      <MetaBlock>
                        <ActionRow>
                          <ActionIcon><Ic n="smile" s={16} c="#3b7fc4" /></ActionIcon>
                          <ActionIcon><Ic n="reply" s={16} /></ActionIcon>
                          <ActionIcon><Ic n="replyAll" s={16} /></ActionIcon>
                          <ActionIcon><Ic n="forward" s={16} /></ActionIcon>
                          <ActionIcon><Ic n="apps" s={16} c="#3b7fc4" /></ActionIcon>
                          <ActionIcon><Ic n="dots" s={16} w={1.5} /></ActionIcon>
                        </ActionRow>
                        <DateText>Thu 1/11/2024 2:30 PM</DateText>
                      </MetaBlock>
                    </CardHead>
                    <CardInner>
                      <Attachment>
                        <Ic n="mail" s={18} c="#9a9a9a" />
                        <AttachText>
                          <AttachName>Confirm the Meeting</AttachName>
                          <AttachKind>Outlook Item</AttachKind>
                        </AttachText>
                        <Ic n="chev" s={14} c="#616161" />
                      </Attachment>
                      <Message>
                        <div>Check his mail and respond accordingly.</div>
                        <Blank />
                        <div>Regards,</div>
                        <div>FNU</div>
                      </Message>
                      <ReplyRow>
                        <ReplyBtn $w={71}><Ic n="reply" s={15} c="#2d6ca8" />Reply</ReplyBtn>
                        <ReplyBtn $w={85}><Ic n="forward" s={15} c="#2d6ca8" />Forward</ReplyBtn>
                      </ReplyRow>
                    </CardInner>
                  </Card>
                </Reading>
              </Content>
            </Main>
          </Body>
        </OutlookWindow>
        <SideBar>
          <SideIcon>
            <Logo s={19}>
              <circle cx="8" cy="8" r="5.500" fill="#bfe0f5" stroke="#4a6a85" strokeWidth="1.500" />
              <path d="M12 12.500l5.500 5.500" stroke="#9b3fd6" strokeWidth="2.500" strokeLinecap="round" />
            </Logo>
          </SideIcon>
          <SideIcon>
            <Logo s={20}><path d="M10 3h7v7L9 18 2.500 11.500z" fill="#4f8ee8" /><path d="M17 3v7L9 18l-2-2 9-13z" fill="#7c6ae8" /><circle cx="13.500" cy="6.500" r="1.200" fill="#fff" /></Logo>
          </SideIcon>
          <SideIcon>
            <Logo s={20}><rect x="2" y="6" width="16" height="11" rx="1.500" fill="#d4532a" /><path d="M7 6V4h6v2" fill="none" stroke="#a83e1e" strokeWidth="1.500" /><rect x="2" y="10" width="16" height="1.500" fill="#f0a078" /><rect x="8.500" y="9.500" width="3" height="3" fill="#ffe4b0" /></Logo>
          </SideIcon>
          <SideIcon>
            <Logo s={20}>
              <circle cx="7" cy="8" r="3" fill="#444" /><path d="M5 10h4l1.500 7h-7z" fill="#444" /><rect x="2" y="16" width="10" height="2.500" fill="#333" />
              <path d="M12 2h1.500v1.500H15V2h1.500v1.500H18V2v4.500h-1.500l.8 5.500H18v2h-6v-2h.7l.8-5.500H12z" fill="#b05ae8" />
            </Logo>
          </SideIcon>
          <SideIcon><M365Side /></SideIcon>
          <SideIcon><OutlookLogo s={20} /></SideIcon>
          <SideIcon>
            <Logo s={20}>
              <path d="M6 4c-1 4-3 6-3 9 0 3 2.500 5 5 4.500 3-.5 6-3 8-8l-2-1c-1.500 3-3.500 5-5.500 5.500C7 14 6 13 6.500 11c.3-1.500 1-3 1.500-5z" fill="#b14be0" />
              <path d="M15 2l.8 2 2 .8-2 .8-.8 2-.8-2-2-.8 2-.8z" fill="#7a3ad8" />
            </Logo>
          </SideIcon>
          <SideIcon>
            <Logo s={20}><path d="M2 6l16-3-5 13-4-5z" fill="#3a9ae8" /><path d="M2 6l7 5 9-8z" fill="#7cc4f5" /><path d="M9 11l1.500 5 2.500-0.500z" fill="#e8a42a" /></Logo>
          </SideIcon>
          <SideIcon><Ic n="plus" s={15} /></SideIcon>
          <SideBottom>
            <SideIcon><Ic n="panel" s={16} /></SideIcon>
            <SideIcon><Ic n="external" s={15} /></SideIcon>
            <SideIcon><Ic n="gear" s={16} /></SideIcon>
          </SideBottom>
        </SideBar>
      </Middle>

      <Taskbar>
        <WinStart>
          <Logo s={16}>
            <path d="M1 3.500l8-1.200V9.500H1zM10.500 2L19 1v8.500h-8.500zM1 11h8v7.200l-8-1.200zM10.500 11H19v8l-8.500-1.200z" fill="#111" />
          </Logo>
        </WinStart>
        <TaskSearch>
          <Ic n="searchTB" s={16} c="#222" w={1.2} />
          Type here to search
          <Planet>
            <SvgBox viewBox="0 0 62 33" width={62} height={31}>
              <defs>
                <linearGradient id="pg" x1="0" y1="0" x2="1" y2="1"><stop offset="0" stopColor="#6ea6d8" /><stop offset="1" stopColor="#24567f" /></linearGradient>
              </defs>
              <circle cx="40" cy="6" r="22" fill="url(#pg)" />
              <path d="M0 30C20 28 50 12 62 -2" stroke="#9fd1ef" strokeWidth="3" fill="none" />
              <circle cx="27" cy="25" r="9" fill="#9fb9ae" />
              <circle cx="7" cy="7" r="3" fill="#6c5a6e" />
            </SvgBox>
          </Planet>
        </TaskSearch>
        <TaskApp $w={46}><Ic n="taskview" s={18} c="#222" /></TaskApp>
        <TaskApp $active $run><EdgeLogo /></TaskApp>
        <TaskApp>
          <Logo s={24}>
            <rect x="2" y="6" width="16" height="12" fill="#1ba1e2" />
            <path d="M2 7l8-5 8 5-8 5z" fill="#0a5fa8" />
            <path d="M4 8.500h12L10 12.500z" fill="#fff" />
          </Logo>
        </TaskApp>
        <TaskApp $run>
          <Logo s={24}>
            <path d="M2 4h6l2 2.500h8V16H2z" fill="#f5b942" />
            <rect x="2" y="7" width="16" height="10" fill="#fbd45b" />
            <path d="M7 17v-4h6v4h-2v-2H9v2z" fill="#2a83d8" />
          </Logo>
        </TaskApp>
        <TaskApp>
          <Logo s={24}>
            <path d="M14 1.500l4.500 2v13l-4.500 2L6 11l-3 2.500L1.500 12.500v-5L3 6.500 6 9z" fill="#7b4fb8" />
            <path d="M14 5.500v9L9 10z" fill="#d8c8ee" />
            <path d="M14 1.500l4.500 2v13l-4.500 2z" fill="#a987d8" />
          </Logo>
        </TaskApp>
        <TaskApp $run>
          <Logo s={24}>
            <circle cx="10" cy="10" r="9" fill="#ea4335" />
            <path d="M1.500 7A9 9 0 0 0 10 19l4-7z" fill="#34a853" />
            <path d="M10 1a9 9 0 0 1 8.500 6H10z" fill="#fbbc04" />
            <circle cx="10" cy="10" r="4.500" fill="#4285f4" stroke="#fff" />
            <circle cx="14" cy="14" r="5" fill="#e8edf5" stroke="#999" strokeWidth=".5" />
            <circle cx="14" cy="12.500" r="1.500" fill="#1f5fa8" />
            <path d="M11 17c.5-2 1.500-2.500 3-2.500s2.500.5 3 2.500z" fill="#1f5fa8" />
          </Logo>
        </TaskApp>
        <TaskApp $run>
          <Logo s={24}>
            <circle cx="10" cy="10" r="9" fill="#d3171f" />
            <ellipse cx="10" cy="10" rx="3.800" ry="6.800" fill="#fff" />
          </Logo>
        </TaskApp>
        <TaskApp>
          <Logo s={24}>
            <circle cx="10" cy="11" r="8" fill="#ff7139" />
            <path d="M4 6c2-4 6-5 9-4-1 2 3 3 5 7 .5 3-1 7-4 9 2-3 2-7-1-9-2-1-5-1-7 1C4 9 4 7 4 6z" fill="#ffbd2e" />
            <circle cx="10" cy="11" r="4" fill="#7a3ad8" />
          </Logo>
        </TaskApp>
        <TaskApp $run>
          <Logo s={24}>
            <rect x="6" y="2" width="13" height="16" rx="1" fill="#2b7cd3" />
            <rect x="6" y="6" width="13" height="4" fill="#41a5ee" />
            <rect x="6" y="14" width="13" height="4" fill="#103f91" />
            <rect x="1" y="5.500" width="10" height="10" rx="1" fill="#185abd" />
            <text x="6" y="13.500" fontSize="8" fontWeight="700" fontFamily="Open Sans, sans-serif" textAnchor="middle" fill="#fff">W</text>
          </Logo>
        </TaskApp>
        <TaskApp $run>
          <Logo s={24}>
            <rect x="1.500" y="2.500" width="17" height="12" fill="#d6d6d6" stroke="#444" />
            <rect x="5" y="5" width="7" height="6" fill="none" stroke="#5a7ed0" strokeDasharray="1 1" />
            <circle cx="13" cy="10" r="1.500" fill="#d3171f" />
            <path d="M8.500 14.500h3v2h-3zM6 17h8v1H6z" fill="#222" />
          </Logo>
        </TaskApp>
        <TaskApp $run>
          <Logo s={24}>
            <circle cx="10" cy="10" r="9" fill="#5a0fc8" />
            <path d="M6.500 7.500a2.500 2.500 0 1 0 0 5c2 0 3.500-5 6-5a2.500 2.500 0 1 1 0 5c-2.500 0-4-5-6-5z" fill="none" stroke="#fff" strokeWidth="1.500" />
            <circle cx="15" cy="15" r="3.500" fill="#f08030" />
          </Logo>
        </TaskApp>
        <Tray>
          <TrayCell $w={20}>
            <Logo s={20}>
              <circle cx="10" cy="10" r="8" fill="#f5a623" />
              <path d="M3 7h14M5 10h13M2 13h14" stroke="#fff2c8" strokeWidth="1.300" />
            </Logo>
          </TrayCell>
          <TrayCell $w={64} $ml={8} $fs={12}>29°C&nbsp; Haze</TrayCell>
          <TrayCell $w={22} $ml={15}><Ic n="chevU" s={14} c="#222" /></TrayCell>
          <TrayCell $w={22}>
            <Logo s={14}><rect x="1" y="5" width="16" height="10" rx="1" fill="none" stroke="#222" /><rect x="3" y="7" width="9" height="6" fill="#222" /><rect x="18" y="8" width="1.500" height="4" fill="#222" /></Logo>
          </TrayCell>
          <TrayCell $w={22}>
            <Logo s={16}>
              <path d="M5 15c-5 0-5-7 0-7 1-4 8-5 10 0 3 .5 4 4 2 6" fill="none" stroke="#222" strokeWidth="1.300" />
              <circle cx="14" cy="14" r="4" fill="none" stroke="#2a8fe8" strokeWidth="1.500" />
            </Logo>
          </TrayCell>
          <TrayCell $w={21}>
            <Logo s={15}><path d="M2 7.500h3L9 4v12l-4-3.500H2zM12 7.500l5 5M17 7.500l-5 5" fill="none" stroke="#222" /></Logo>
          </TrayCell>
          <TrayCell $w={32} $fs={10.500}>ENG</TrayCell>
          <ClockCell><div>14:37</div><div>11-01-2024</div></ClockCell>
          <NotifWrap>
            <Logo s={19}><path d="M2 2h16v12H9l-3 3v-3H2z" fill="#111" /><path d="M5 5h10M5 8h10M5 11h7" stroke="#d5deea" strokeWidth=".8" /></Logo>
            <Badge>1</Badge>
          </NotifWrap>
        </Tray>
      </Taskbar>

      <Menu>
        <MenuItem><Ic n="forward" s={18} c="#4a8fd1" />Forward</MenuItem>
        <MenuItem><Ic n="mailClip" s={18} c="#4a8fd1" />Forward as attachment</MenuItem>
      </Menu>
      <Annot $x={538} $y={131} $w={220} $h={142} />
      <Annot $x={689} $y={138} $w={52} $h={38} />
    </Page>
  );
}
